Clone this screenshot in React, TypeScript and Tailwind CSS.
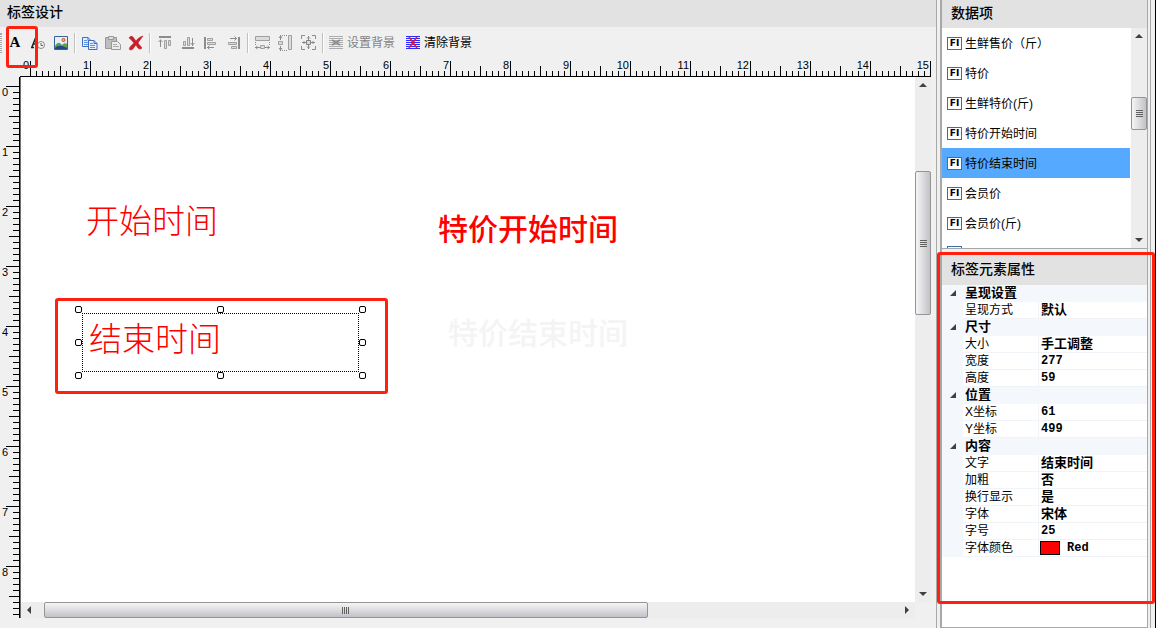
import { Fragment, useState } from 'react';
import type { ReactNode } from 'react';
import clsx from 'clsx';

interface PropertyRow {
    label: string;
    value: string;
    color?: boolean;
}

interface PropertyGroup {
    title: string;
    rows: PropertyRow[];
}

const FIELDS = ['生鲜售价（斤）', '特价', '生鲜特价(斤)', '特价开始时间', '特价结束时间', '会员价', '会员价(斤)'];

const GROUPS: PropertyGroup[] = [
    { title: '呈现设置', rows: [{ label: '呈现方式', value: '默认' }] },
    {
        title: '尺寸',
        rows: [
            { label: '大小', value: '手工调整' },
            { label: '宽度', value: '277' },
            { label: '高度', value: '59' },
        ],
    },
    {
        title: '位置',
        rows: [
            { label: 'X坐标', value: '61' },
            { label: 'Y坐标', value: '499' },
        ],
    },
    {
        title: '内容',
        rows: [
            { label: '文字', value: '结束时间' },
            { label: '加粗', value: '否' },
            { label: '换行显示', value: '是' },
            { label: '字体', value: '宋体' },
            { label: '字号', value: '25' },
            { label: '字体颜色', value: 'Red', color: true },
        ],
    },
];

const HANDLES = [
    '-left-2 -top-2',
    'left-[134px] -top-2',
    '-right-2 -top-2',
    '-left-2 top-[25px]',
    '-right-2 top-[25px]',
    '-left-2 -bottom-2',
    'left-[134px] -bottom-2',
    '-right-2 -bottom-2',
];

function tickLength(i: number) {
    if (i % 10 === 0) return 15;
    return i % 5 === 0 ? 10 : 5;
}

function HorizontalRuler() {
    return (
        <svg className="block h-[19px] w-full shrink-0" shapeRendering="crispEdges">
            <rect x="20" y="18" width="911" height="1" />
            {Array.from({ length: 151 }, (_, i) => (
                <rect key={i} x={30 + i * 6} y={18 - tickLength(i)} width="1" height={tickLength(i)} />
            ))}
            {Array.from({ length: 16 }, (_, i) => (
                <text key={i} x={29 + i * 60} y="11" textAnchor="end" className="text-[11px]">
                    {i}
                </text>
            ))}
        </svg>
    );
}

function VerticalRuler() {
    return (
        <svg className="block w-[21px] shrink-0 self-stretch" shapeRendering="crispEdges">
            <rect x="19" y="0" width="1" height="100%" />
            <rect x="20" y="0" width="1" height="100%" fill="#707070" />
            {Array.from({ length: 89 }, (_, i) => {
                const w = i % 10 === 0 ? 13 : i % 5 === 0 ? 10 : 6;
                return <rect key={i} x={19 - w} y={9 + i * 6} width={w} height="1" />;
            })}
            {Array.from({ length: 9 }, (_, i) => (
                <text key={i} x="2" y={19 + i * 60} className="text-[11px]">
                    {i}
                </text>
            ))}
        </svg>
    );
}

function Arrow({ d, label }: { d: string; label: string }) {
    return (
        <button type="button" aria-label={label} className="flex size-4 shrink-0 items-center justify-center">
            <svg viewBox="0 0 8 8" className="size-2" fill="#404040">
                <path d={d} />
            </svg>
        </button>
    );
}

interface ScrollbarProps {
    vertical?: boolean;
    before: number;
    thumb: number;
    after: number;
}

function Scrollbar({ vertical, before, thumb, after }: ScrollbarProps) {
    return (
        <div className={clsx('flex shrink-0 bg-[#ededed]', vertical ? 'w-4 flex-col' : 'h-4')}>
            <Arrow label={vertical ? '向上' : '向左'} d={vertical ? 'M0 6 4 2l4 4z' : 'M6 0 2 4l4 4z'} />
            <div style={{ flexGrow: before }} className="basis-0" />
            <div
                style={{ flexGrow: thumb }}
                className={clsx(
                    'flex basis-0 items-center justify-center gap-px rounded-[2px] border border-[#959595] from-[#f5f5f5] via-[#dddde0] to-[#c0c0c6]',
                    vertical ? 'flex-col bg-linear-to-r' : 'bg-linear-to-b',
                )}
            >
                {[0, 1, 2, 3].map((i) => (
                    <span key={i} className={clsx('bg-[#606060]', vertical ? 'h-px w-[7px]' : 'h-[7px] w-px')} />
                ))}
            </div>
            <div style={{ flexGrow: after }} className="basis-0" />
            <Arrow label={vertical ? '向下' : '向右'} d={vertical ? 'M0 2h8L4 6z' : 'M2 0l4 4-4 4z'} />
        </div>
    );
}

function Icon({ children }: { children: ReactNode }) {
    return (
        <svg viewBox="0 0 16 16" className="size-4 shrink-0" fill="none">
            {children}
        </svg>
    );
}

function ToolButton({ label, disabled, children }: { label: string; disabled?: boolean; children: ReactNode }) {
    return (
        <button type="button" title={label} aria-label={label} disabled={disabled} className="flex h-[23px] w-[23px] items-center pl-1">
            {children}
        </button>
    );
}

function Separator() {
    return (
        <div className="flex w-[6px] justify-center">
            <span className="h-5 w-[2px] border-r border-white bg-[#c0c0c0]" />
        </div>
    );
}

function PageIcon({ x, y }: { x: number; y: number }) {
    return (
        <g transform={`translate(${x} ${y})`}>
            <path d="M.5.5H6l3 3v6H.5z" fill="#e4efff" stroke="#3c6fc0" />
            <path d="M6 .5v3h3" stroke="#3c6fc0" />
            <path d="M2 3.5h3M2 5.5h5M2 7.5h5" stroke="#5b93e0" />
        </g>
    );
}

function Toolbar() {
    return (
        <div className="relative flex h-[31px] shrink-0 items-center pl-[3px]">
            <span className="absolute left-0 h-5 w-[2px] border-x border-dotted border-[#a8a8a8]" />
            <ToolButton label="文本">
                <span className="w-4 text-center font-['Liberation_Serif',serif] text-[15px] font-bold">A</span>
            </ToolButton>
            <ToolButton label="时间文本">
                <Icon>
                    <path d="M1 12.5h3M2 12 5.5 3M5.500 3 9 12M3 9h5" stroke="#202020" strokeWidth="1.500" />
                    <circle cx="11" cy="10" r="3.500" fill="#f6f6f6" stroke="#8a8a8a" />
                    <path d="M11 8v2.500h2" stroke="#666" />
                </Icon>
            </ToolButton>
            <ToolButton label="图片">
                <Icon>
                    <path d="M1.500 1.500h13v13h-13z" fill="#e3f1fc" stroke="#3b6092" />
                    <path d="M2 11c3-5 5-3 7-1 2-2 4-2 5-1v5H2z" fill="#5ca052" />
                    <path d="M2 13c3-3 6-3 12 0v1H2z" fill="#20478a" />
                    <circle cx="10.500" cy="5" r="2" fill="#e0562e" />
                    <circle cx="10.500" cy="5" r="1" fill="#ffc06a" />
                </Icon>
            </ToolButton>
            <Separator />
            <ToolButton label="复制">
                <Icon>
                    <PageIcon x={0} y={2} />
                    <PageIcon x={6} y={5} />
                </Icon>
            </ToolButton>
            <ToolButton label="粘贴" disabled>
                <Icon>
                    <path d="M.5 2.500h11v11H.5z" fill="#bdbdbd" stroke="#999" />
                    <path d="M3.500 1.500h5v3h-5z" fill="#dedede" stroke="#999" />
                    <path d="M6.500 6.500h6l3 3v5h-9z" fill="#ededed" stroke="#999" />
                    <path d="M8 9.500h4M8 11.500h6" stroke="#aaa" />
                </Icon>
            </ToolButton>
            <ToolButton label="删除">
                <Icon>
                    <path
                        d="M1 3c1-2 3-2 4-1l3 4c2-3 4-4 7-5-2 3-4 5-5 7 1 2 3 3 4 5-2 2-4 1-6-3-2 2-3 5-5 5-3 0-2-3 3-7C4 6 3 4 1 3z"
                        fill="#c9202c"
                        stroke="#b01824"
                        strokeWidth=".5"
                    />
                </Icon>
            </ToolButton>
            <Separator />
            <ToolButton label="顶端对齐" disabled>
                <Icon>
                    <path d="M2 1h12v2H2z" fill="#8c8c8c" />
                    <path d="M3.500 4.500V12M1.500 7l2-2 2 2" stroke="#8c8c8c" />
                    <path d="M7.500 5.500h2v8h-2zM11.500 5.500h2v5h-2z" fill="#dcdcdc" stroke="#a0a0a0" />
                </Icon>
            </ToolButton>
            <ToolButton label="底端对齐" disabled>
                <Icon>
                    <path d="M2 12h12v2H2z" fill="#8c8c8c" />
                    <path d="M12.500 3v8M10.500 8l2 2 2-2" stroke="#8c8c8c" />
                    <path d="M3.500 6.500h2v4h-2zM7.500 2.500h2v8h-2z" fill="#dcdcdc" stroke="#a0a0a0" />
                </Icon>
            </ToolButton>
            <ToolButton label="左对齐" disabled>
                <Icon>
                    <path d="M1 2h2v12H1z" fill="#8c8c8c" />
                    <path d="M4 12.500h7M6.500 10.500l-2 2 2 2" stroke="#8c8c8c" />
                    <path d="M4.500 3.500h5v2h-5zM4.500 7.500h8v2h-8z" fill="#dcdcdc" stroke="#a0a0a0" />
                </Icon>
            </ToolButton>
            <ToolButton label="右对齐" disabled>
                <Icon>
                    <path d="M12 2h2v12h-2z" fill="#8c8c8c" />
                    <path d="M4 3.500h7M8.500 1.500l2 2-2 2" stroke="#8c8c8c" />
                    <path d="M2.500 7.500h8v2h-8zM5.500 11.500h5v2h-5z" fill="#dcdcdc" stroke="#a0a0a0" />
                </Icon>
            </ToolButton>
            <Separator />
            <ToolButton label="等宽" disabled>
                <Icon>
                    <path d="M.5 1.500h14v4H.5z" fill="#dcdcdc" stroke="#a0a0a0" />
                    <path d="M.5 7v4M14.500 7v4" stroke="#8c8c8c" strokeDasharray="1 1" />
                    <path d="M0 12.500h5M10 12.500h5M2.500 11l-2 1.500 2 1.500M12.500 11l2 1.500-2 1.500" stroke="#8c8c8c" />
                    <path d="M5.500 10.500h4v3h-4z" fill="#dcdcdc" stroke="#a0a0a0" />
                </Icon>
            </ToolButton>
            <ToolButton label="等高" disabled>
                <Icon>
                    <path d="M10.500 .5h3v14h-3z" fill="#dcdcdc" stroke="#a0a0a0" />
                    <path d="M4 .5h5M4 15.500h5" stroke="#8c8c8c" strokeDasharray="1 1" />
                    <path d="M2.500 0v5M2.500 11v5M1 3l1.500-2L4 3M1 13l1.500 2L4 13" stroke="#8c8c8c" />
                    <path d="M.5 6.500h4v3h-4z" fill="#dcdcdc" stroke="#a0a0a0" />
                </Icon>
            </ToolButton>
            <ToolButton label="相同大小" disabled>
                <Icon>
                    <path d="M.5 4V.5H4M11 .5h3.500V4M14.500 11v3.500H11M4 14.500H.5V11" stroke="#8c8c8c" />
                    <path d="M7.500 1v4M7.500 10v4M1 7.500h4M10 7.500h4" stroke="#8c8c8c" />
                    <path d="M6 3.500 7.500 2 9 3.500M6 11.500 7.500 13 9 11.500M3.500 6 2 7.500 3.500 9M11.500 6 13 7.500 11.500 9" stroke="#8c8c8c" />
                    <path d="M5.500 5.500h4v4h-4z" fill="#dcdcdc" stroke="#808080" />
                </Icon>
            </ToolButton>
            <Separator />
            <button type="button" disabled className="flex h-[23px] items-center gap-[3px] pl-[2px] text-xs text-[#838383]">
                <Icon>
                    <path d="M1 1.500h14M1 3.500h14M1 5.500h14M1 7.500h14M1 9.500h14M1 11.500h14M1 13.500h14" stroke="#acacac" />
                    <path d="m4 5 8 5M12 5l-8 5" stroke="#8c8c8c" strokeWidth="1.500" />
                </Icon>
                设置背景
            </button>
            <button type="button" className="ml-[10px] flex h-[23px] items-center gap-[3px] text-xs">
                <Icon>
                    <path d="M1 1.500h14M1 3.500h14M1 5.500h14M1 7.500h14M1 9.500h14M1 11.500h14M1 13.500h14" stroke="#2828ff" />
                    <path d="m4 2 8 11M12 2 4 13" stroke="#f01818" strokeWidth="1.500" />
                </Icon>
                清除背景
            </button>
            {/* callout around the text tool */}
            <div className="pointer-events-none absolute -top-px left-[6px] h-[42px] w-8 rounded-[3px] border-[3px] border-[#ff2010]" />
        </div>
    );
}

function Canvas() {
    return (
        <div className="relative min-h-0 flex-1 overflow-hidden bg-white text-[#ff0000]">
            <div className="absolute left-[65px] top-[125px] text-[33px] leading-10 font-light">开始时间</div>
            <div className="absolute left-[417px] top-[133px] text-[30px] leading-10 font-medium">特价开始时间</div>
            <div className="absolute left-[427px] top-[237px] text-[30px] leading-10 font-medium text-[#f4f4f4]">特价结束时间</div>
            <div className="absolute left-[61px] top-[236px] h-[59px] w-[277px] border border-dotted border-black pt-[6px] pl-[6px] text-[33px] leading-10 font-light">
                结束时间
                {HANDLES.map((position) => (
                    <span key={position} className={clsx('absolute size-[7px] rounded-[2px] border border-black bg-white', position)} />
                ))}
            </div>
            <div className="pointer-events-none absolute left-[34px] top-[221px] h-24 w-[333px] rounded-[3px] border-[3px] border-[#ff2010]" />
        </div>
    );
}

function FieldList() {
    const [selected, setSelected] = useState('特价结束时间');

    return (
        <section className="flex shrink-0 flex-col border-b border-[#a8a8a8] bg-white">
            <h2 className="flex h-7 items-center bg-[#e2e2e2] pb-[2px] pl-[9px] text-sm font-medium">数据项</h2>
            <div className="flex h-[220px] gap-px">
                <ul className="min-w-0 flex-1 overflow-hidden">
                    {FIELDS.map((name) => (
                        <li key={name}>
                            <button
                                type="button"
                                onClick={() => setSelected(name)}
                                className={clsx('flex h-[30px] w-full items-center gap-[3px] pl-[5px] text-xs', name === selected && 'bg-[#55aaff]')}
                            >
                                <span className="flex h-[13px] w-[15px] shrink-0 items-center justify-center border border-[#3a6ea5] bg-white font-['DejaVu_Sans',sans-serif] text-[9px] leading-none font-bold">
                                    FI
                                </span>
                                <span className="pt-px">{name}</span>
                            </button>
                        </li>
                    ))}
                    <li className="pt-2 pl-[5px]">
                        <span className="block h-[13px] w-[15px] border border-[#3a6ea5] bg-white" />
                    </li>
                </ul>
                <Scrollbar vertical before={52} thumb={31} after={101} />
            </div>
        </section>
    );
}

function PropertyGrid() {
    const [closed, setClosed] = useState<string[]>([]);

    function toggle(title: string) {
        setClosed((prev) => (prev.includes(title) ? prev.filter((t) => t !== title) : [...prev, title]));
    }

    return (
        <section className="mt-1 min-h-0 flex-1 border-b border-[#a8a8a8] bg-white">
            <h2 className="flex h-8 items-center bg-[#e2e2e2] pl-[9px] text-sm font-medium">标签元素属性</h2>
            <table className="w-full table-fixed border-separate border-spacing-0">
                <colgroup>
                    <col className="w-[21px]" />
                    <col className="w-[76px]" />
                    <col />
                </colgroup>
                <tbody>
                    {GROUPS.map((group) => (
                        <Fragment key={group.title}>
                            <tr className="h-[17px] bg-[#f4f7fc]">
                                <th colSpan={3} className="p-0 text-left">
                                    <button
                                        type="button"
                                        aria-expanded={!closed.includes(group.title)}
                                        onClick={() => toggle(group.title)}
                                        className="flex h-[17px] w-full items-center gap-[9px] pb-px pl-2 text-[13px] leading-4 font-bold"
                                    >
                                        <svg viewBox="0 0 6 6" className="size-[6px]">
                                            <path d="M6 0v6H0z" fill="#404040" />
                                        </svg>
                                        {group.title}
                                    </button>
                                </th>
                            </tr>
                            {!closed.includes(group.title) &&
                                group.rows.map((row) => (
                                    <tr key={row.label} className="h-[17px]">
                                        <td className="bg-[#f4f7fc] p-0" />
                                        <th className="border-r border-b border-[#f0f3f8] p-0 pl-[2px] text-left text-xs leading-4 font-normal">{row.label}</th>
                                        <td
                                            className={clsx(
                                                'border-b border-[#f0f3f8] py-0 pr-0 text-[13px] leading-4 font-bold',
                                                row.color ? 'pl-px' : 'pl-[2px]',
                                            )}
                                        >
                                            {/^\w+$/.test(row.value) ? (
                                                <span className="flex items-center gap-[7px] font-['Liberation_Mono',monospace] text-xs leading-4">
                                                    {row.color && <span className="h-[14px] w-5 border border-black bg-[#ff0000]" />}
                                                    {row.value}
                                                </span>
                                            ) : (
                                                <span className="block h-4">{row.value}</span>
                                            )}
                                        </td>
                                    </tr>
                                ))}
                        </Fragment>
                    ))}
                </tbody>
            </table>
        </section>
    );
}

export default function App() {
    return (
        <div className="flex h-screen overflow-hidden bg-[#f0f0f0] font-['Liberation_Sans','Noto_Sans_CJK_SC',sans-serif] text-black">
            <main className="flex min-w-0 flex-1 flex-col border-r border-[#a8a8a8] pb-[10px]">
                <h1 className="flex h-[27px] shrink-0 items-center bg-[#e2e2e2] pb-[3px] pl-[7px] text-sm font-medium">标签设计</h1>
                <Toolbar />
                <HorizontalRuler />
                <div className="flex min-h-0 flex-1 pr-[5px]">
                    <VerticalRuler />
                    <div className="flex min-w-0 flex-1 flex-col">
                        <Canvas />
                        <Scrollbar before={7} thumb={601} after={251} />
                    </div>
                    <div className="flex pb-4">
                        <Scrollbar vertical before={78} thumb={142} after={270} />
                    </div>
                </div>
            </main>
            <aside className="relative flex w-[219px] shrink-0 border-r border-black pr-1 pl-[3px]">
                <div className="flex min-w-0 flex-1 border-r border-[#a8a8a8] pr-[2px]">
                    <div className="flex min-w-0 flex-1 flex-col border-r border-l-2 border-[#a8a8a8]">
                        <FieldList />
                        <PropertyGrid />
                    </div>
                </div>
                <div className="pointer-events-none absolute top-[252px] left-0 h-[352px] w-[218px] rounded-[3px] border-[3px] border-[#ff2010]" />
            </aside>
        </div>
    );
}
